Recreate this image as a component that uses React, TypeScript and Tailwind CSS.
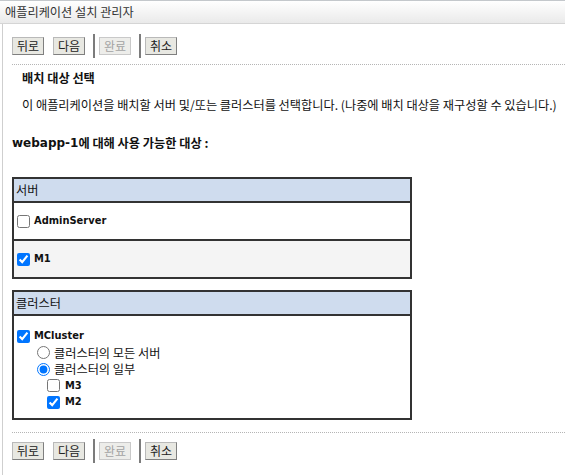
import React from "react";

const KR = "font-['Noto_Sans_CJK_KR',sans-serif]";
const LAT = "font-['DejaVu_Sans_Condensed','Liberation_Sans','Noto_Sans_CJK_KR',sans-serif]";

function Btn({ label, disabled }: { label: string; disabled?: boolean }) {
  return (
    <div
      className={
        "h-[18px] w-[32px] flex items-center justify-center border text-[12px] leading-none " +
        KR +
        (disabled
          ? " bg-[#ededea] text-[#a3a3a3] border-[#c9c9c9]"
          : " bg-[#e8e8e2] text-[#222] border-[#b9b9b9] border-r-[#7f7f7f] border-b-[#7f7f7f]")
      }
    >
      {label}
    </div>
  );
}

function Sep() {
  return <div className="w-[2px] h-[24px] bg-[#7c7c7c]" />;
}

function ButtonRow() {
  return (
    <div className="flex items-center h-[24px]">
      <Btn label="뒤로" />
      <div className="w-[9px]" />
      <Btn label="다음" />
      <div className="w-[8px]" />
      <Sep />
      <div className="w-[4px]" />
      <Btn label="완료" disabled />
      <div className="w-[8px]" />
      <Sep />
      <div className="w-[4px]" />
      <Btn label="취소" />
    </div>
  );
}

function Check({ checked }: { checked?: boolean }) {
  return (
    <input
      type="checkbox"
      defaultChecked={checked}
      className="m-0 w-[13px] h-[13px] shrink-0"
    />
  );
}

function Radio({ checked }: { checked?: boolean }) {
  return (
    <input
      type="radio"
      name="cl"
      defaultChecked={checked}
      className="m-0 w-[13px] h-[13px] shrink-0"
    />
  );
}

export default function App() {
  return (
    <div className="relative w-[565px] h-[475px] bg-white overflow-hidden text-[#111]">
      <div
        className={
          "h-[24px] border-t border-b border-t-[#c4c8cc] border-b-[#d5d5d5] bg-gradient-to-b from-white to-[#eaeaea] flex items-center pl-[5px] text-[12.2px] text-[#333] " +
          KR
        }
      >
        애플리케이션 설치 관리자
      </div>
      <div className="ml-[2px] border-l border-[#cfcfcf] h-[451px] pl-[9px]">
        <div className="pt-[10px]">
          <ButtonRow />
        </div>
        <div className="mt-[6px] border-t border-dotted border-[#b5b5b5]" />
        <div className={"ml-[10px] mt-[5px] h-[16px] flex items-center font-bold text-[12.2px] " + KR}>
          배치 대상 선택
        </div>
        <div className={"ml-[10px] mt-[11px] h-[16px] flex items-center text-[12.2px] whitespace-nowrap " + KR}>
          이 애플리케이션을 배치할 서버 및/또는 클러스터를 선택합니다. (나중에 배치 대상을 재구성할 수 있습니다.)
        </div>
        <div className={"mt-[22px] h-[16px] flex items-center font-bold text-[12.2px] " + KR}>
          <span className="font-['DejaVu_Sans',sans-serif] text-[12px]">webapp-1</span>에 대해 사용 가능한 대상 :
        </div>

        <div className="mt-[26px] w-[400px] border-2 border-[#333]">
          <div className={"h-[24px] bg-[#cfdcee] border-b-2 border-[#333] flex items-center pl-[2px] text-[12.2px] " + KR}>
            서버
          </div>
          <div className="h-[38px] bg-white border-b-2 border-[#333] flex items-center pl-[3px] gap-[4px]">
            <Check />
            <span className={LAT + " font-bold text-[11px]"}>AdminServer</span>
          </div>
          <div className="h-[36px] bg-[#f4f4f4] flex items-center pl-[3px] gap-[4px]">
            <Check checked />
            <span className={LAT + " font-bold text-[11px]"}>M1</span>
          </div>
        </div>

        <div className="mt-[11px] w-[400px] border-2 border-[#333]">
          <div className={"h-[24px] bg-[#cfdcee] border-b-2 border-[#333] flex items-center pl-[2px] text-[12.2px] " + KR}>
            클러스터
          </div>
          <div className="h-[102px] bg-white pt-[12px] pl-[3px]">
            <div className="h-[16.5px] flex items-center gap-[4px]">
              <Check checked />
              <span className={LAT + " font-bold text-[11px]"}>MCluster</span>
            </div>
            <div className="h-[16.5px] flex items-center gap-[4px] pl-[20px]">
              <Radio />
              <span className={KR + " text-[12.2px]"}>클러스터의 모든 서버</span>
            </div>
            <div className="h-[16.5px] flex items-center gap-[4px] pl-[20px]">
              <Radio checked />
              <span className={KR + " text-[12.2px]"}>클러스터의 일부</span>
            </div>
            <div className="h-[16.5px] flex items-center gap-[5px] pl-[30px]">
              <Check />
              <span className={LAT + " font-bold text-[11px]"}>M3</span>
            </div>
            <div className="h-[16.5px] flex items-center gap-[5px] pl-[30px]">
              <Check checked />
              <span className={LAT + " font-bold text-[11px]"}>M2</span>
            </div>
          </div>
        </div>

        <div className="mt-[12px] border-t border-dotted border-[#b5b5b5]" />
        <div className="mt-[6px]">
          <ButtonRow />
        </div>
      </div>
    </div>
  );
}
